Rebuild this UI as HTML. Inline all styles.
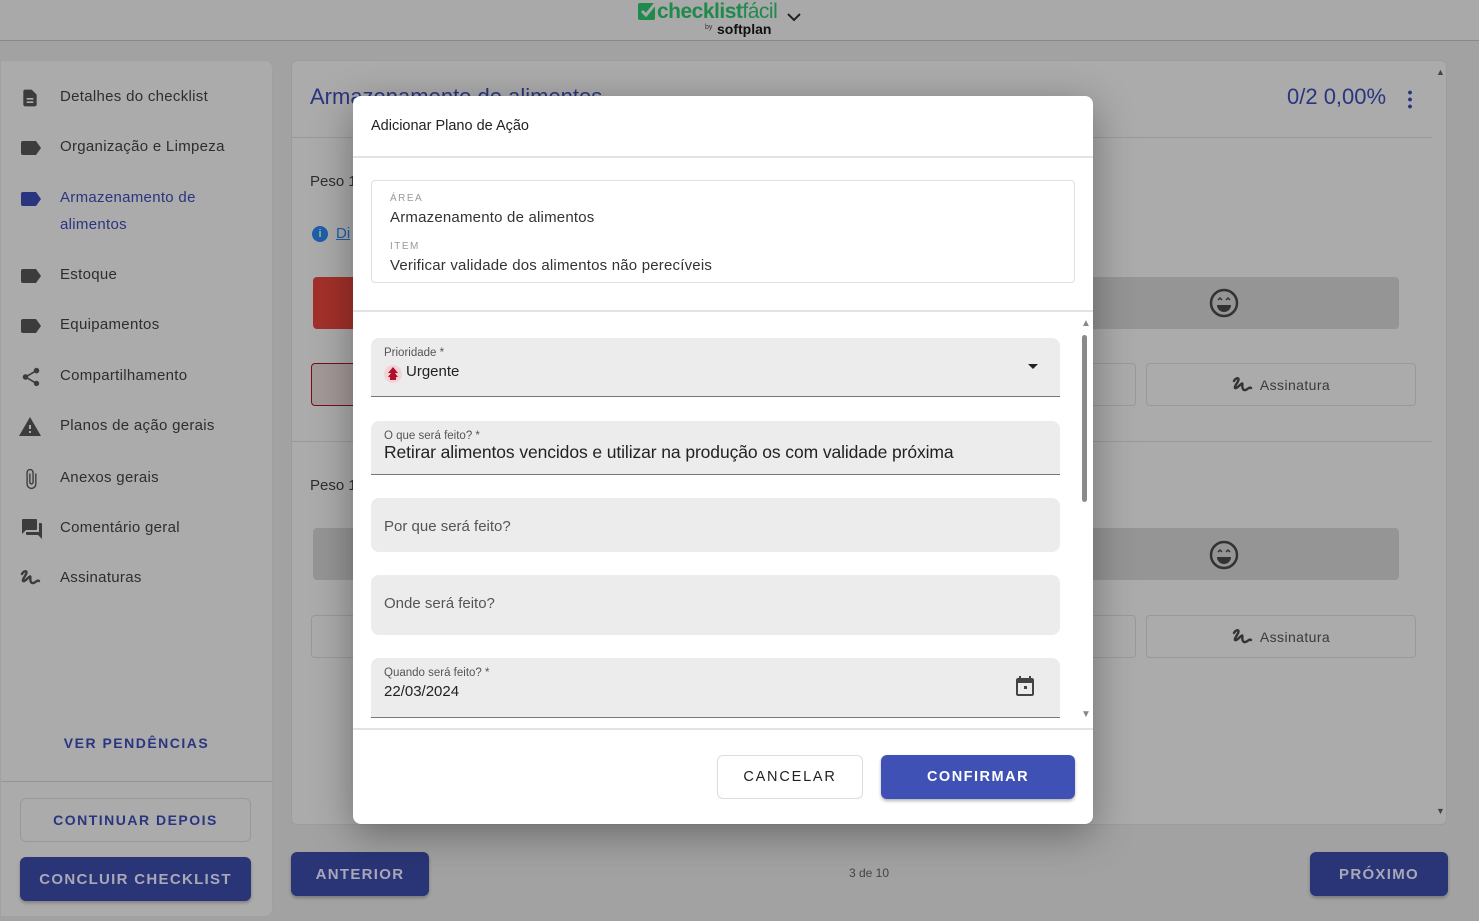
<!DOCTYPE html>
<html><head><meta charset="utf-8"><style>
*{box-sizing:border-box;margin:0;padding:0}
body{width:1479px;height:921px;overflow:hidden;background:#a2a2a2;font-family:"Liberation Sans",Roboto,sans-serif;position:relative;color:#2e2e2e}
.abs{position:absolute}
.hdr{left:0;top:0;width:1479px;height:41px;background:#a9a9a9;border-bottom:1px solid #8a8a8a}
.side{left:0;top:60px;width:273px;height:857px;background:#ababab;border-radius:0 8px 8px 0;border:1px solid #a0a0a0}
.nav{position:absolute;left:59px;font-size:15px;color:#2e2e2e;letter-spacing:.3px}
.ico{position:absolute;left:19px}
.card{left:291px;top:60px;width:1156px;height:765px;background:#ababab;border:1px solid #9c9c9c;border-radius:6px}
.btnd{position:absolute;background:#2a3577;color:#a8a8b8;font-weight:bold;font-size:15px;letter-spacing:1.3px;border-radius:6px;display:flex;align-items:center;justify-content:center;box-shadow:0 2px 3px rgba(0,0,0,.25)}
.modal{left:353px;top:96px;width:740px;height:728px;background:#fff;border-radius:8px;box-shadow:0 10px 40px rgba(0,0,0,.35)}
.fld{position:absolute;left:18px;width:689px;background:#ececec;border-radius:8px 8px 0 0}
.lab{position:absolute;left:13px;font-size:11.5px;color:#555}
.val{position:absolute;left:13px;font-size:15px;color:#222}
.ph{position:absolute;left:13px;font-size:15px;color:#555}
</style></head><body>
<div class="abs hdr"></div>
<svg class="abs" style="left:638px;top:2px" width="19" height="18" viewBox="0 0 19 18"><rect x="0" y="1" width="17" height="17" rx="2" fill="#1f8a4c"/><path d="M4 9l4 4 9-11" stroke="#a9a9a9" stroke-width="3" fill="none"/></svg>
<div class="abs" style="left:657px;top:0px;font-size:21px;color:#1f8a4c;font-weight:bold;letter-spacing:-.5px">checklist<span style="font-weight:normal">fácil</span></div>
<div class="abs" style="left:705px;top:24px;font-size:7px;color:#333">by</div>
<div class="abs" style="left:717px;top:21px;font-size:14px;font-weight:bold;color:#111">softplan</div>
<svg class="abs" style="left:787px;top:12px" width="14" height="10"><path d="M1 2l6 6 6-6" stroke="#222" stroke-width="2" fill="none"/></svg>

<div class="abs side">
<svg class="ico" style="top:27px" width="20" height="20" viewBox="0 0 24 24"><path fill="#3c3c3c" d="M14 2H6c-1.1 0-2 .9-2 2v16c0 1.1.9 2 2 2h12c1.1 0 2-.9 2-2V8l-6-6zM16 18H8v-2h8v2zm0-4H8v-2h8v2z"/></svg>
<div class="nav" style="top:27px">Detalhes do checklist</div>
<svg class="ico" style="top:79px" width="22" height="16"><path d="M3 1h13l5 7-5 7H3a2 2 0 0 1-2-2V3a2 2 0 0 1 2-2z" fill="#3c3c3c"/></svg>
<div class="nav" style="top:77px">Organização e Limpeza</div>
<svg class="ico" style="top:130px" width="22" height="16"><path d="M3 1h13l5 7-5 7H3a2 2 0 0 1-2-2V3a2 2 0 0 1 2-2z" fill="#2a3580"/></svg>
<div class="nav" style="color:#2a3580;line-height:27px;top:123px">Armazenamento de<br>alimentos</div>
<svg class="ico" style="top:207px" width="22" height="16"><path d="M3 1h13l5 7-5 7H3a2 2 0 0 1-2-2V3a2 2 0 0 1 2-2z" fill="#3c3c3c"/></svg>
<div class="nav" style="top:205px">Estoque</div>
<svg class="ico" style="top:257px" width="22" height="16"><path d="M3 1h13l5 7-5 7H3a2 2 0 0 1-2-2V3a2 2 0 0 1 2-2z" fill="#3c3c3c"/></svg>
<div class="nav" style="top:255px">Equipamentos</div>
<svg class="ico" style="top:304px" width="22" height="24" viewBox="0 0 24 24"><path fill="#3c3c3c" d="M18 16.08c-.76 0-1.44.3-1.960.77L8.91 12.7c.05-.23.09-.46.09-.7s-.04-.47-.09-.7l7.05-4.11c.54.5 1.250.81 2.040.81 1.66 0 3-1.34 3-3s-1.34-3-3-3-3 1.34-3 3c0 .24.04.47.09.7L8.04 9.81C7.5 9.31 6.79 9 6 9c-1.66 0-3 1.34-3 3s1.34 3 3 3c.79 0 1.5-.31 2.04-.81l7.12 4.16c-.05.21-.08.43-.08.65 0 1.61 1.31 2.92 2.92 2.92s2.92-1.31 2.92-2.92-1.31-2.92-2.92-2.92z"/></svg>
<div class="nav" style="top:306px">Compartilhamento</div>
<svg class="abs" style="left:16px;top:354px" width="26" height="24" viewBox="0 0 24 24"><path fill="#3c3c3c" d="M1 21h22L12 2 1 21zm12-3h-2v-2h2v2zm0-4h-2v-4h2v4z"/></svg>
<div class="nav" style="top:356px">Planos de ação gerais</div>
<svg class="ico" style="top:405px" width="22" height="26" viewBox="0 0 24 24"><path fill="#3c3c3c" d="M16.5 6v11.5c0 2.21-1.79 4-4 4s-4-1.79-4-4V5c0-1.38 1.12-2.5 2.5-2.5s2.5 1.12 2.5 2.5v10.5c0 .55-.45 1-1 1s-1-.45-1-1V6H10v9.5c0 1.38 1.12 2.5 2.5 2.5s2.5-1.120 2.5-2.5V5c0-2.21-1.79-4-4-4S7 2.79 7 5v12.5c0 3.04 2.46 5.5 5.5 5.5s5.5-2.46 5.5-5.5V6h-1.5z"/></svg>
<div class="nav" style="top:408px">Anexos gerais</div>
<svg class="ico" style="top:456px" width="24" height="24" viewBox="0 0 24 24"><path fill="#3c3c3c" d="M21 6h-2v9H6v2c0 .55.45 1 1 1h11l4 4V7c0-.55-.45-1-1-1zm-4 6V3c0-.55-.45-1-1-1H3c-.55 0-1 .45-1 1v14l4-4h10c.55 0 1-.45 1-1z"/></svg>
<div class="nav" style="top:458px">Comentário geral</div>
<svg class="ico" style="top:506px" width="22" height="22" viewBox="0 0 22 22"><path d="M2 7c2-4 7-4 3 2s-2 7 3 2 0 3 4 5c3 1 5-4 7-2" stroke="#3c3c3c" stroke-width="2.4" fill="none" stroke-linecap="round"/></svg>
<div class="nav" style="top:508px">Assinaturas</div>
<div class="abs" style="left:0;top:674px;width:271px;text-align:center;font-size:14px;font-weight:bold;color:#2a3580;letter-spacing:1.5px">VER PENDÊNCIAS</div>
<div class="abs" style="left:0;top:720px;width:271px;border-top:1px solid #959595"></div>
<div class="abs" style="left:19px;top:737px;width:231px;height:44px;border:1px solid #999;border-radius:6px;display:flex;align-items:center;justify-content:center;font-size:14px;font-weight:bold;color:#2a3580;letter-spacing:1.5px">CONTINUAR DEPOIS</div>
<div class="btnd" style="left:19px;top:796px;width:231px;height:44px">CONCLUIR CHECKLIST</div>
</div>

<div class="abs card">
<div class="abs" style="left:18px;top:23px;font-size:22px;color:#2a3580">Armazenamento de alimentos</div>
<div class="abs" style="left:995px;top:23px;font-size:22px;color:#2a3580">0/2 0,00%</div>
<div class="abs" style="left:1116px;top:28px;width:4px;height:20px;background:radial-gradient(circle,#2a3580 1.8px,transparent 2px) 0 0/4px 7px"></div>
<div class="abs" style="left:0;top:76px;width:1140px;border-top:1px solid #999"></div>
<div class="abs" style="left:18px;top:112px;font-size:15px">Peso 1</div>
<div class="abs" style="left:20px;top:165px;width:16px;height:16px;border-radius:50%;background:#1e5fa8;color:#aaa;font-size:11px;text-align:center;line-height:16px;font-weight:bold">i</div>
<div class="abs" style="left:44px;top:164px;font-size:15px;color:#1e5fa8;text-decoration:underline">Di</div>
<div class="abs" style="left:21px;top:216px;width:60px;height:52px;background:#a3302a;border-radius:4px"></div>
<div class="abs" style="left:780px;top:216px;width:327px;height:52px;background:#959595;border-radius:0 4px 4px 0"></div>
<svg class="abs" style="left:916px;top:226px" width="32" height="32" viewBox="0 0 32 32"><circle cx="16" cy="16" r="13" stroke="#333" stroke-width="2.5" fill="none"/><path d="M9 18h14a7 7 0 0 1-14 0z" fill="#333"/><path d="M10 13l2-2 2 2M18 13l2-2 2 2" stroke="#333" stroke-width="1.5" fill="none"/></svg>
<div class="abs" style="left:19px;top:302px;width:60px;height:43px;border:1px solid #7a0c1c;border-radius:4px;background:#a39898"></div>
<div class="abs" style="left:760px;top:302px;width:84px;height:43px;border:1px solid #999;border-radius:4px"></div>
<div class="abs" style="left:854px;top:302px;width:270px;height:43px;border:1px solid #999;border-radius:4px;display:flex;align-items:center;justify-content:center;font-size:14px;color:#3a3a3a;letter-spacing:.4px"><svg width="22" height="22" viewBox="0 0 22 22" style="margin-right:6px"><path d="M2 7c2-4 7-4 3 2s-2 7 3 2 0 3 4 5c3 1 5-4 7-2" stroke="#333" stroke-width="2.4" fill="none" stroke-linecap="round"/></svg>Assinatura</div>
<div class="abs" style="left:0;top:380px;width:1140px;border-top:1px solid #999"></div>
<div class="abs" style="left:18px;top:416px;font-size:15px">Peso 1</div>
<div class="abs" style="left:21px;top:467px;width:60px;height:52px;background:#959595;border-radius:4px"></div>
<div class="abs" style="left:780px;top:467px;width:327px;height:52px;background:#959595;border-radius:0 4px 4px 0"></div>
<svg class="abs" style="left:916px;top:478px" width="32" height="32" viewBox="0 0 32 32"><circle cx="16" cy="16" r="13" stroke="#333" stroke-width="2.5" fill="none"/><path d="M9 18h14a7 7 0 0 1-14 0z" fill="#333"/><path d="M10 13l2-2 2 2M18 13l2-2 2 2" stroke="#333" stroke-width="1.5" fill="none"/></svg>
<div class="abs" style="left:19px;top:554px;width:60px;height:43px;border:1px solid #999;border-radius:4px"></div>
<div class="abs" style="left:760px;top:554px;width:84px;height:43px;border:1px solid #999;border-radius:4px"></div>
<div class="abs" style="left:854px;top:554px;width:270px;height:43px;border:1px solid #999;border-radius:4px;display:flex;align-items:center;justify-content:center;font-size:14px;color:#3a3a3a;letter-spacing:.4px"><svg width="22" height="22" viewBox="0 0 22 22" style="margin-right:6px"><path d="M2 7c2-4 7-4 3 2s-2 7 3 2 0 3 4 5c3 1 5-4 7-2" stroke="#333" stroke-width="2.4" fill="none" stroke-linecap="round"/></svg>Assinatura</div>
<div class="abs" style="left:1144px;top:6px;font-size:9px;color:#444">▲</div>
<div class="abs" style="left:1144px;top:745px;font-size:9px;color:#444">▼</div>
</div>

<div class="btnd" style="left:291px;top:852px;width:138px;height:44px">ANTERIOR</div>
<div class="abs" style="left:819px;top:866px;width:100px;text-align:center;font-size:12px;color:#444">3 de 10</div>
<div class="btnd" style="left:1310px;top:852px;width:138px;height:44px">PRÓXIMO</div>

<div class="abs modal">
<div class="abs" style="left:18px;top:22px;font-size:14.5px;color:#222">Adicionar Plano de Ação</div>
<div class="abs" style="left:0;top:60px;width:740px;border-top:2px solid #e3e3e3"></div>
<div class="abs" style="left:18px;top:84px;width:704px;height:103px;border:1px solid #e0e0e0;border-radius:4px">
<div class="abs" style="left:18px;top:12px;font-size:10px;color:#999;letter-spacing:1.5px">ÁREA</div>
<div class="abs" style="left:18px;top:28px;font-size:15px;color:#333;letter-spacing:.2px">Armazenamento de alimentos</div>
<div class="abs" style="left:18px;top:60px;font-size:10px;color:#999;letter-spacing:1.5px">ITEM</div>
<div class="abs" style="left:18px;top:76px;font-size:15px;color:#333;letter-spacing:.2px">Verificar validade dos alimentos não perecíveis</div>
</div>
<div class="abs" style="left:0;top:214px;width:740px;border-top:2px solid #e3e3e3"></div>
<div class="fld" style="top:242px;height:59px;border-bottom:1px solid #777">
<div class="lab" style="top:9px">Prioridade *</div>
<div class="abs" style="left:13px;top:27px;width:18px;height:18px;border-radius:50%;background:#f3d4d6"></div>
<svg class="abs" style="left:16px;top:29px" width="12" height="14"><path d="M6 0l5 6H8l3 4H1l3-4H1z M3 10h6v3H3z" fill="#b0102a"/></svg>
<div class="val" style="left:35px;top:25px">Urgente</div>
<svg class="abs" style="left:656px;top:25px" width="12" height="8"><path d="M1 1h10L6 6z" fill="#222"/></svg>
</div>
<div class="fld" style="top:325px;height:54px;border-bottom:1px solid #777">
<div class="lab" style="top:9px">O que será feito? *</div>
<div class="val" style="top:21px;font-size:17.5px;letter-spacing:-.1px">Retirar alimentos vencidos e utilizar na produção os com validade próxima</div>
</div>
<div class="fld" style="top:402px;height:54px;border-radius:8px"><div class="ph" style="top:20px">Por que será feito?</div></div>
<div class="fld" style="top:479px;height:60px;border-radius:8px"><div class="ph" style="top:20px">Onde será feito?</div></div>
<div class="fld" style="top:562px;height:60px;border-bottom:1px solid #777">
<div class="lab" style="top:9px">Quando será feito? *</div>
<div class="val" style="top:25px">22/03/2024</div>
<svg class="abs" style="left:642px;top:16px" width="24" height="24" viewBox="0 0 24 24"><path fill="#444" d="M19 4h-1V2h-2v2H8V2H6v2H5c-1.1 0-2 .9-2 2v14c0 1.1.9 2 2 2h14c1.1 0 2-.9 2-2V6c0-1.1-.9-2-2-2zm0 16H5V9h14v11zM11 12h3v3h-3z"/></svg>
</div>
<div class="abs" style="left:728px;top:222px;font-size:10px;color:#888">▲</div>
<div class="abs" style="left:729px;top:239px;width:5px;height:167px;background:#8a8a8a;border-radius:3px"></div>
<div class="abs" style="left:728px;top:613px;font-size:10px;color:#888">▼</div>
<div class="abs" style="left:0;top:632px;width:740px;border-top:2px solid #e3e3e3"></div>
<div class="abs" style="left:364px;top:659px;width:146px;height:44px;border:1px solid #ddd;border-radius:6px;display:flex;align-items:center;justify-content:center;font-size:14.5px;letter-spacing:1.8px;color:#222">CANCELAR</div>
<div class="abs" style="left:528px;top:659px;width:194px;height:44px;background:#3f51b5;border-radius:6px;display:flex;align-items:center;justify-content:center;font-size:14.5px;font-weight:bold;letter-spacing:1.5px;color:#fff;box-shadow:0 2px 3px rgba(0,0,0,.3)">CONFIRMAR</div>
</div>
</body></html>
